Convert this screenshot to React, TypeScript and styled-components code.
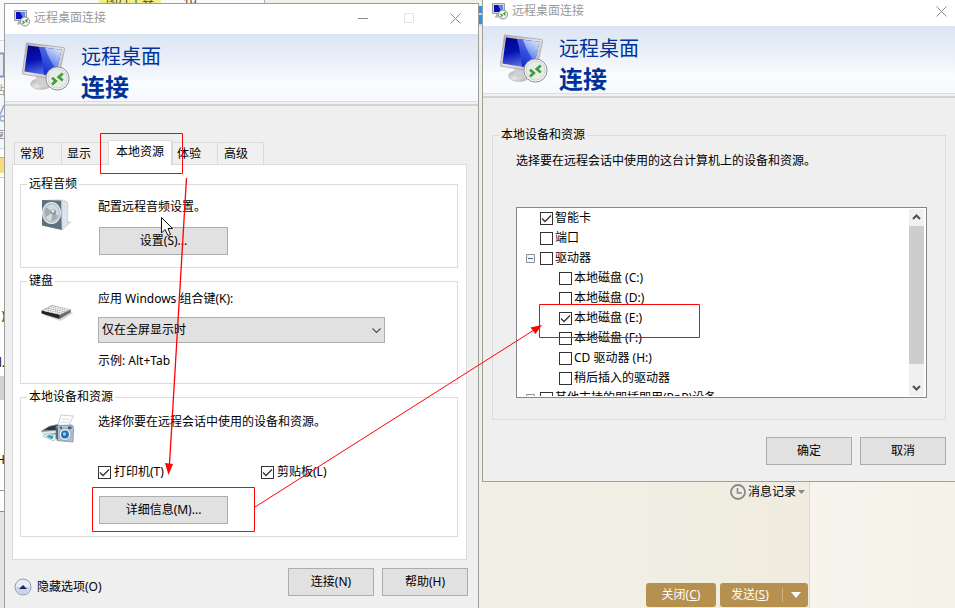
import React, { useId } from "react";
import styled, { createGlobalStyle, css } from "styled-components";

const GlobalStyle = createGlobalStyle`
  * { box-sizing: border-box; }
  body {
    margin: 0;
    background: #f2efe6;
    color: #000;
    font: 12px/16px "Noto Sans", "Noto Sans CJK SC", sans-serif;
  }
  button, select, input { font: inherit; color: inherit; margin: 0; }
`;

/* ---------- desktop ---------- */

const Desktop = styled.main`
  position: relative;
  min-height: 100vh;
  overflow: hidden;
  display: grid;
  grid-template-columns: 475fr 473fr;
  column-gap: 3px;
  padding-left: 4px;
  align-items: start;
`;

const Backdrop = styled.div`
  position: absolute;
  inset: 0;
  display: grid;
  grid-template-columns: 5px minmax(0, 1fr) 145px;
`;

const Strip = styled.div`
  display: flex;
  flex-direction: column;
  overflow: hidden;
  background: #fff;
`;

const StripBlock = styled.div<{ $h: number; $bg?: string; $line?: string; $color?: string }>`
  flex: none;
  display: flex;
  justify-content: flex-end;
  align-items: center;
  height: ${(p) => p.$h}px;
  background: ${(p) => p.$bg ?? "transparent"};
  border-top: ${(p) => (p.$line ? `1px solid ${p.$line}` : "none")};
  color: ${(p) => p.$color ?? "#111"};
`;

const StripFill = styled.div`
  flex: 1;
  background: #e4e5e8;
  border-top: 1px solid #8c8c90;
`;

const ChatPane = styled.div`
  display: flex;
  flex-direction: column;
  justify-content: space-between;
  align-items: flex-end;
  background: linear-gradient(90deg, #f2efe6 70%, #f0eee2 85%, #f0ecdf);
  border-right: 1px solid #dcd8ca;
`;

const SidePane = styled.div`
  background: linear-gradient(90deg, #f6f4ec, #f5f2e9);
`;

const RibbonTop = styled.div`
  display: flex;
  width: 100%;
  height: 27px;
  overflow: hidden;
  line-height: 6px;
  color: #4a4a38;
`;

const RibbonTitle = styled.div`
  flex: none;
  display: flex;
  gap: 22px;
  width: 260px;
  height: 3px;
  padding-left: 94px;
  background: #fafafa;
  border-right: 1px solid #aaa;
`;

const RibbonTag = styled.span`
  width: 62px;
  height: 3px;
  padding-left: 7px;
  background: #f2ee84;
  overflow: hidden;
  display: flex;
  align-items: flex-end;
`;

const RibbonAccent = styled.span`
  flex: none;
  width: 5px;
  height: 20px;
  margin: 6px 0 0 212px;
  background: repeating-linear-gradient(#2b94ea 0 7px, #b5dcfb 7px 9px, #2b94ea 9px 11px);
`;

const ChatFoot = styled.div`
  display: flex;
  flex-direction: column;
  align-items: flex-end;
  gap: 83px;
  padding: 0 1px 1px 0;
`;

const HistoryLink = styled.button`
  display: flex;
  align-items: center;
  gap: 2px;
  padding: 0 3px 0 0;
  border: 0;
  background: none;
  line-height: 16px;
`;

const ChatButtons = styled.div`
  display: flex;
  gap: 4px;
`;

const GoldButton = styled.button<{ $wide?: boolean }>`
  display: flex;
  align-items: center;
  justify-content: ${(p) => (p.$wide ? "flex-start" : "center")};
  width: ${(p) => (p.$wide ? 88 : 70)}px;
  height: 24px;
  padding: ${(p) => (p.$wide ? "0 0 0 11px" : 0)};
  border: 0;
  border-radius: 3px;
  background: #b5904e;
  color: #fff;
`;

const GoldSplit = styled.span`
  display: grid;
  place-items: center;
  width: 26px;
  height: 14px;
  margin-left: auto;
  border-left: 1px solid #cdb486;
`;

/* ---------- windows ---------- */

const Window = styled.section<{ $second?: boolean }>`
  position: relative;
  display: flex;
  flex-direction: column;
  background: #efefef;
  ${(p) =>
    p.$second
      ? css`
          border: solid #9fa09c;
          border-width: 0 0 1px 1px;
        `
      : css`
          margin-top: 3px;
          min-height: calc(100vh - 3px);
          border: solid #9d9d9b;
          border-width: 1px 1px 0;
        `}
`;

const TitleBar = styled.header<{ $second?: boolean }>`
  display: flex;
  align-items: center;
  height: ${(p) => (p.$second ? 26 : 30)}px;
  padding: 0 0 ${(p) => (p.$second ? 4 : 2)}px 9px;
  background: #fff;
  color: #999;
`;

const TitleText = styled.span`
  flex: 1;
  margin-left: 4px;
`;

const WinButton = styled.button<{ $narrow?: boolean }>`
  display: grid;
  place-items: center;
  width: ${(p) => (p.$narrow ? 28 : 46)}px;
  height: 20px;
  padding: 0;
  border: 0;
  background: none;
`;

const Banner = styled.div<{ $top: number }>`
  display: flex;
  gap: 10px;
  height: 67px;
  padding: ${(p) => p.$top}px 0 0 17px;
  background: linear-gradient(#dbe5f3, #e8eef8 35%, #fafcfd 75%, #f6f9fd);
  color: #003399;
`;

const BannerTitle = styled.h1`
  display: flex;
  flex-direction: column;
  margin: 0;
  font-size: 20px;
  font-weight: 400;
  line-height: 30px;
  strong { font-size: 24px; font-weight: 700; }
`;

const BannerEdge = styled.div`
  height: 5px;
  border-top: 1px solid #dcdcdc;
  border-bottom: 2px solid #d3d3d3;
  background: #f1f1f1;
`;

const TabList = styled.div`
  display: flex;
  align-items: flex-end;
  height: 25px;
  margin: 34px 0 -1px;
  padding-left: 9px;
  z-index: 1;
`;

const Tab = styled.button<{ $active?: boolean; $tight?: boolean }>`
  height: 22px;
  margin-bottom: 1px;
  padding: 0 ${(p) => (p.$tight ? 16 : 17)}px 0 ${(p) => (p.$tight ? 4 : 5)}px;
  border: solid #dadada;
  border-width: 1px 0 0 1px;
  background: #f0f0f0;
  line-height: 20px;
  &:last-child { padding-left: 6px; padding-right: 15px; border-right-width: 1px; }
  ${(p) =>
    p.$active &&
    css`
      height: 25px;
      margin-bottom: 0;
      padding: 0 7px 2px;
      border-width: 1px 1px 0;
      background: #fff;
      line-height: 22px;
    `}
`;

const TabPanel = styled.div`
  display: flex;
  flex-direction: column;
  gap: 5px;
  margin: 0 11px 0 7px;
  padding: 11px 8px 22px 7px;
  border: 1px solid #dadada;
  background: #fff;
`;

const Group = styled.fieldset`
  min-width: 0;
  margin: 0;
  padding: 0;
  border: 1px solid #dcdcdc;
`;

const GroupTitle = styled.legend`
  height: 16px;
  margin-left: 6px;
  padding: 0 2px;
`;

const GroupBody = styled.div<{ $top: number; $bottom?: number }>`
  display: grid;
  grid-template-columns: 57px minmax(0, 1fr);
  padding: ${(p) => p.$top}px 0 ${(p) => p.$bottom ?? 12}px 20px;
`;

const Fields = styled.div<{ $gap: number }>`
  display: flex;
  flex-direction: column;
  align-items: flex-start;
  gap: ${(p) => p.$gap}px;
`;

const IconCell = styled.div<{ $top?: number }>`
  padding-top: ${(p) => p.$top ?? 0}px;
  svg { display: block; }
`;

const PushButton = styled.button<{ $long?: boolean }>`
  width: ${(p) => (p.$long ? 129 : 86)}px;
  height: 28px;
  margin-left: ${(p) => (p.$long ? 1 : 0)}px;
  padding: 0;
  border: 1px solid #adadad;
  background: #e1e1e1;
`;

const SelectWrap = styled.div`
  display: grid;
  width: 287px;
  max-width: 100%;
  > * { grid-area: 1 / 1; }
  svg { place-self: center end; margin-right: 4px; pointer-events: none; }
`;

const Select = styled.select`
  appearance: none;
  height: 26px;
  padding: 0 20px 0 3px;
  border: 1px solid #adadad;
  border-radius: 0;
  background: #e1e1e1;
`;

const CheckRow = styled.div`
  display: grid;
  grid-template-columns: 163px auto;
  margin-top: 22px;
  margin-bottom: 4px;
`;

const CheckLabel = styled.label`
  display: flex;
  align-items: center;
  gap: 3px;
  white-space: nowrap;
`;

const CheckCell = styled.span`
  display: grid;
  place-items: center;
  > * { grid-area: 1 / 1; }
  svg { display: none; pointer-events: none; }
  input:checked + svg { display: block; }
`;

const CheckInput = styled.input`
  appearance: none;
  width: 13px;
  height: 13px;
  border: 1px solid #333;
  background: #fff;
`;

const Footer = styled.footer<{ $second?: boolean }>`
  display: flex;
  align-items: center;
  justify-content: flex-end;
  gap: 8px;
  padding: ${(p) => (p.$second ? "17px 9px 16px" : "8px 10px 12px 9px")};
`;

const OptionsToggle = styled.button`
  display: flex;
  align-items: center;
  gap: 5px;
  margin: 10px auto 0 0;
  padding: 0;
  border: 0;
  background: none;
`;

const DeviceBody = styled.div`
  padding: 29px 9px 0;
`;

const DeviceGroup = styled(Group)`
  padding: 10px 18px 21px 23px;
`;

const DeviceTitle = styled(GroupTitle)`
  margin-left: -17px;
`;

const Hint = styled.p`
  margin: 0 0 38px;
`;

const TreeBox = styled.div`
  display: flex;
  height: 191px;
  padding: 0 2px 1px 9px;
  border: 1px solid #828790;
  background: #fff;
`;

const Tree = styled.ul`
  flex: 1;
  margin: 0;
  padding: 0;
  overflow: hidden;
  list-style: none;
`;

const TreeItem = styled.li<{ $child?: boolean }>`
  display: grid;
  grid-template-columns: ${(p) => (p.$child ? 33 : 14)}px auto;
  align-items: center;
  height: 20px;
  label { gap: 2px; }
`;

const Expander = styled.button`
  display: block;
  width: 9px;
  height: 9px;
  padding: 0;
  border: 0;
  background: none;
  svg { display: block; }
`;

const ScrollBar = styled.div`
  display: flex;
  flex-direction: column;
  width: 15px;
  margin-top: 1px;
  background: #f0f0f0;
`;

const ScrollButton = styled.button`
  display: grid;
  place-items: center;
  height: 17px;
  padding: 0;
  border: 0;
  background: none;
`;

const ScrollThumb = styled.div`
  height: 138px;
  margin-bottom: auto;
  background: #cdcdcd;
`;

const Overlay = styled.svg`
  position: absolute;
  left: 0;
  top: 0;
  z-index: 2;
  pointer-events: none;
`;

/* ---------- icons ---------- */

function RemoteIcon() {
  const id = useId();
  return (
    <svg width="49" height="51" viewBox="0 0 49 51" aria-hidden="true">
      <defs>
        <linearGradient id={id + "a"} x1="0" y1="0" x2="0.3" y2="1">
          <stop offset="0" stopColor="#03037e" />
          <stop offset="0.5" stopColor="#0611b4" />
          <stop offset="1" stopColor="#5a74e6" />
        </linearGradient>
        <linearGradient id={id + "b"} x1="0" y1="0" x2="1" y2="1">
          <stop offset="0" stopColor="#a9a9a9" />
          <stop offset="0.5" stopColor="#e5e5e5" />
          <stop offset="1" stopColor="#a8a8a8" />
        </linearGradient>
        <linearGradient id={id + "c"} x1="0.2" y1="1" x2="0.7" y2="0">
          <stop offset="0" stopColor="#0a2bdc" />
          <stop offset="0.45" stopColor="#5f80ee" />
          <stop offset="1" stopColor="#d5e0fb" />
        </linearGradient>
      </defs>
      <ellipse cx="19" cy="42" rx="10.500" ry="5.500" fill={`url(#${id}b)`} stroke="#b8b8b8" strokeWidth="0.6" />
      <path d="M14 34 L26 36 L24 43 Q19 45 15 42Z" fill="#cfcfcf" />
      <path d="M4.500 1 L41.500 5.500 Q43 6 42.500 7.500 L36 38 L0.500 32 Q0 31 0.400 30Z" fill={`url(#${id}b)`} stroke="#9c9c9c" strokeWidth="0.7" />
      <path d="M6 3.500 L39.500 7.800 L33.500 34.500 L2.500 29.500Z" fill={`url(#${id}a)`} />
      <path d="M17 5 L39.500 7.800 L33.500 34.500 L22 32.600 Q21 18 17 5Z" fill={`url(#${id}c)`} />
      <path d="M17 5 Q21 18 22 32.600 L33.500 34.500 L35 28 Q28 20 23 5.700Z" fill="#0723cc" opacity="0.55" />
      <circle cx="35.500" cy="36.500" r="11.600" fill="#f6f6f6" stroke="#8e8e8e" />
      <circle cx="35.500" cy="36.500" r="9.600" fill="#e9ebe9" stroke="#c8c8c8" strokeWidth="0.8" />
      <path d="M30 35.800 L33.800 39 L30 42.500 M40.800 31.500 L36.700 35 L40.800 38.500" fill="none" stroke="#3c9f38" strokeWidth="2.600" />
    </svg>
  );
}

function RemoteIconSmall() {
  return (
    <svg width="16" height="17" viewBox="0 0 16 17" aria-hidden="true">
      <path d="M4 11 H9 V13 H10 V14.500 H3 V13 H4Z" fill="#b5b5b5" />
      <path d="M0.500 0.500 H12.500 V10.500 H0.500Z" fill="#d9d9d9" stroke="#9a9a9a" />
      <path d="M2 2 H11 V9 H2Z" fill="#0611b8" />
      <path d="M6 2 H11 V9 L9 8Z" fill="#5f84ee" />
      <circle cx="11" cy="11.500" r="4.500" fill="#f4f4f4" stroke="#8e8e8e" />
      <path d="M8.500 11 L10.200 12.300 L8.700 13.800 M13.500 9.200 L11.800 10.800 L13.500 12.300" fill="none" stroke="#2f9a2c" strokeWidth="1.300" />
    </svg>
  );
}

function SpeakerIcon() {
  return (
    <svg width="32" height="32" viewBox="0 0 32 32" aria-hidden="true">
      <path d="M20 31 L31 23 L27 22Z" fill="#ccc" opacity="0.7" />
      <path d="M1 1 L17 0 Q24 0 27 3 L26 25 L21 31 L1 27Z" fill="#dfe6ec" />
      <path d="M1 1 L20.500 1.500 L21 31 L1 26.500Z" fill="#5c7280" />
      <path d="M20.500 1.500 Q25 2 27 4 L26.500 26 L21 31Z" fill="#dbe4ec" stroke="#b5c2cc" strokeWidth="0.5" />
      <ellipse cx="10.500" cy="14" rx="9" ry="10.500" fill="#b4bfc5" stroke="#e8eef0" strokeWidth="1.200" />
      <ellipse cx="10.800" cy="14" rx="7" ry="8.400" fill="#d3dade" />
      <path d="M12 13 L5 8 Q3 13 5 18Z M12 13 L10 22 Q15 22 17 17Z" fill="#a2adb3" />
      <circle cx="12.500" cy="13" r="2.600" fill="#8a969d" />
      <circle cx="12" cy="12.300" r="1.300" fill="#f1f6f8" />
    </svg>
  );
}

function KeyboardIcon() {
  return (
    <svg width="32" height="18" viewBox="0 0 32 18" aria-hidden="true">
      <path d="M2 11 L20 17 L32 9 L28 6Z" fill="#bbb" opacity="0.6" />
      <path d="M0.500 6.500 L19 10.500 L18.500 15 L0.500 9.500Z" fill="#252525" />
      <path d="M19 10.500 L30 5.500 L29.500 8.500 L18.500 15Z" fill="#66696c" />
      <path d="M0.500 6.500 L11 1 L30 5.500 L19 11Z" fill="#a2a2a2" />
      <path d="M3 6.200 L20 9.800 M5.500 4.900 L22.500 8.500 M8 3.600 L25 7.200 M10.500 2.400 L27.500 6" stroke="#fbfbfb" strokeWidth="1.300" strokeDasharray="1.900 0.400" fill="none" />
    </svg>
  );
}

function PrinterIcon() {
  return (
    <svg width="34" height="30" viewBox="0 0 34 30" aria-hidden="true">
      <path d="M17 11 L20 1 L32.500 2 L27 13Z" fill="#fcfcfc" stroke="#b6bbc0" strokeWidth="0.7" />
      <path d="M21 5 L29 5.500 M20 8 L28 8.500" stroke="#dbe0e4" />
      <path d="M0 17 L8 12 L17 10 L18 23 L6 24Z" fill="#7d8a94" />
      <path d="M3 16 L9 12.500 L17 11 L16 16Z" fill="#30383e" />
      <path d="M0 18 L15 16.500 L15 19 L2 21Z" fill="#dfe7ec" />
      <path d="M2 22.500 L5 20 L17 20.500 L13 27Z" fill="#e8f5fc" stroke="#9eacb6" strokeWidth="0.6" />
      <path d="M5 22.500 L8 21 L13 22 L11 25Z" fill="#3f9cce" />
      <path d="M8 24 L11 23 L12 25Z" fill="#58a84f" />
      <path d="M15 12.500 L18 11.500 L31 11 Q32.500 12 32.500 14 L32 28 L16 26.500Z" fill="#b4c1cb" stroke="#758492" strokeWidth="0.7" />
      <path d="M15 13.500 L17 13 L17 26 L14.500 24Z" fill="#596977" />
      <circle cx="24" cy="20.500" r="6" fill="#e6edf2" stroke="#8295a3" strokeWidth="0.7" />
      <circle cx="24" cy="20.500" r="3.900" fill="#1d6fb6" />
      <circle cx="23.500" cy="20" r="1.700" fill="#8ad2f4" />
      <circle cx="20" cy="13.800" r="1.200" fill="#2f699e" />
      <path d="M27 12.500 H30.500 V15 H27Z" fill="#2c5f98" />
    </svg>
  );
}

const CloseGlyph = () => (
  <svg width="11" height="11" viewBox="0 0 11 11" aria-hidden="true">
    <path d="M0.500 0.500 L10.500 10.500 M10.500 0.500 L0.500 10.500" stroke="#8c8c8c" />
  </svg>
);

const Chevron = ({ up, bold }: { up?: boolean; bold?: boolean }) => (
  <svg width="9" height="7" viewBox="0 0 9 7" aria-hidden="true">
    <path d={up ? "M1 5 L4.500 1.500 L8 5" : bold ? "M1 2 L4.500 5.500 L8 2" : "M0.500 1.500 L4.500 5.500 L8.500 1.500"} fill="none" stroke="#505050" strokeWidth={bold ? 2 : 1.1} />
  </svg>
);

/* ---------- parts ---------- */

function Check({ label, checked }: { label: string; checked?: boolean }) {
  return (
    <CheckLabel>
      <CheckCell>
        <CheckInput type="checkbox" defaultChecked={checked} />
        <svg width="11" height="9" viewBox="0 0 11 9" aria-hidden="true">
          <path d="M1 4.500 L4 7.500 L10 1.500" fill="none" stroke="#333" strokeWidth="1.300" />
        </svg>
      </CheckCell>
      {label}
    </CheckLabel>
  );
}

function WindowHead({ top }: { top: number }) {
  return (
    <>
      <Banner $top={top}>
        <RemoteIcon />
        <BannerTitle>
          远程桌面<strong>连接</strong>
        </BannerTitle>
      </Banner>
      <BannerEdge />
    </>
  );
}

const treeItems = [
  { label: "智能卡", checked: true },
  { label: "端口" },
  { label: "驱动器", open: true },
  { label: "本地磁盘 (C:)", child: true },
  { label: "本地磁盘 (D:)", child: true },
  { label: "本地磁盘 (E:)", child: true, checked: true },
  { label: "本地磁盘 (F:)", child: true },
  { label: "CD 驱动器 (H:)", child: true },
  { label: "稍后插入的驱动器", child: true },
  { label: "其他支持的即插即用(PnP)设备", open: true },
];

function SettingsWindow() {
  return (
    <Window aria-label="远程桌面连接">
      <TitleBar>
        <RemoteIconSmall />
        <TitleText>远程桌面连接</TitleText>
        <WinButton aria-label="最小化">
          <svg width="10" height="11"><path d="M0 5.500 H10" stroke="#8c8c8c" /></svg>
        </WinButton>
        <WinButton aria-label="最大化" disabled>
          <svg width="10" height="10"><path d="M0.500 0.500 H9.500 V9.500 H0.500Z" fill="none" stroke="#e3e3e3" /></svg>
        </WinButton>
        <WinButton aria-label="关闭"><CloseGlyph /></WinButton>
      </TitleBar>
      <WindowHead top={8} />
      <TabList role="tablist">
        <Tab role="tab">常规</Tab>
        <Tab role="tab">显示</Tab>
        <Tab role="tab" aria-selected $active>本地资源</Tab>
        <Tab role="tab" $tight>体验</Tab>
        <Tab role="tab">高级</Tab>
      </TabList>
      <TabPanel role="tabpanel">
        <Group>
          <GroupTitle>远程音频</GroupTitle>
          <GroupBody $top={7}>
            <IconCell><SpeakerIcon /></IconCell>
            <Fields $gap={12}>
              <span>配置远程音频设置。</span>
              <PushButton $long>设置(S)...</PushButton>
            </Fields>
          </GroupBody>
        </Group>
        <Group>
          <GroupTitle>键盘</GroupTitle>
          <GroupBody $top={2} $bottom={14}>
            <IconCell $top={13}><KeyboardIcon /></IconCell>
            <Fields $gap={10}>
              <label htmlFor="keys">应用 Windows 组合键(K):</label>
              <SelectWrap>
                <Select id="keys"><option>仅在全屏显示时</option></Select>
                <Chevron />
              </SelectWrap>
              <span>示例: Alt+Tab</span>
            </Fields>
          </GroupBody>
        </Group>
        <Group>
          <GroupTitle>本地设备和资源</GroupTitle>
          <GroupBody $top={9}>
            <IconCell><PrinterIcon /></IconCell>
            <Fields $gap={12}>
              <span>选择你要在远程会话中使用的设备和资源。</span>
              <CheckRow>
                <Check label="打印机(T)" checked />
                <Check label="剪贴板(L)" checked />
              </CheckRow>
              <PushButton $long>详细信息(M)...</PushButton>
            </Fields>
          </GroupBody>
        </Group>
      </TabPanel>
      <Footer>
        <OptionsToggle>
          <svg width="18" height="18" viewBox="0 0 18 18" aria-hidden="true">
            <circle cx="9" cy="9" r="8" fill="#e8ecf4" stroke="#8f9bb5" />
            <path d="M2 9 A7 7 0 0 0 16 9Z" fill="#cbd3e4" />
            <path d="M5 11 L9 7 L13 11Z" fill="#172b5c" />
          </svg>
          隐藏选项(O)
        </OptionsToggle>
        <PushButton>连接(N)</PushButton>
        <PushButton>帮助(H)</PushButton>
      </Footer>
    </Window>
  );
}

function DevicesWindow() {
  return (
    <Window $second aria-label="本地设备和资源">
      <TitleBar $second>
        <RemoteIconSmall />
        <TitleText>远程桌面连接</TitleText>
        <WinButton $narrow aria-label="关闭"><CloseGlyph /></WinButton>
      </TitleBar>
      <WindowHead top={8} />
      <DeviceBody>
        <DeviceGroup>
          <DeviceTitle>本地设备和资源</DeviceTitle>
          <Hint>选择要在远程会话中使用的这台计算机上的设备和资源。</Hint>
          <TreeBox>
            <Tree>
              {treeItems.map((item) => (
                <TreeItem key={item.label} $child={item.child}>
                  {item.open ? (
                    <Expander aria-label="折叠">
                      <svg width="9" height="9" viewBox="0 0 9 9">
                        <path d="M0.500 0.500 H8.500 V8.500 H0.500Z" fill="#f6f6f6" stroke="#919191" />
                        <path d="M2 4.500 H7" stroke="#4b63a7" />
                      </svg>
                    </Expander>
                  ) : (
                    <span />
                  )}
                  <Check label={item.label} checked={item.checked} />
                </TreeItem>
              ))}
            </Tree>
            <ScrollBar>
              <ScrollButton aria-label="向上滚动"><Chevron up bold /></ScrollButton>
              <ScrollThumb />
              <ScrollButton aria-label="向下滚动"><Chevron bold /></ScrollButton>
            </ScrollBar>
          </TreeBox>
        </DeviceGroup>
      </DeviceBody>
      <Footer $second>
        <PushButton>确定</PushButton>
        <PushButton>取消</PushButton>
      </Footer>
    </Window>
  );
}

export default function App() {
  return (
    <Desktop lang="zh-CN">
      <GlobalStyle />
      <Backdrop>
        <Strip>
          <StripBlock $h={40} $bg="#fafafa" />
          <StripBlock $h={12} $line="#d5dae2" $bg="#f3f6fa" />
          <StripBlock $h={26} $bg="#f3f6fa">
            <svg width="5" height="26" aria-hidden="true">
              <path d="M0 1.500 H4 V24.500 H0" fill="#e4ecf8" stroke="#7f98c6" strokeWidth="2" />
            </svg>
          </StripBlock>
          <StripBlock $h={26} $bg="#f3f6fa" $color="#999">贴</StripBlock>
          <StripBlock $h={20} $bg="#f3f6fa">
            <svg width="5" height="18" aria-hidden="true">
              <path d="M4 0 L0 10" stroke="#93a5c9" strokeWidth="1.500" />
              <circle cx="2.500" cy="13.500" r="2.500" fill="none" stroke="#93a5c9" strokeWidth="1.300" />
            </svg>
          </StripBlock>
          <StripBlock $h={24} $bg="#f3f6fa" $color="#888">享</StripBlock>
          <StripBlock $h={9} $line="#d0d4da" />
          <StripBlock $h={16} $bg="#f8dc7c" $line="#d9b544" />
          <StripBlock $h={4} />
          <StripBlock $h={131} $line="#c4c8ce" />
          <StripBlock $h={16}>)</StripBlock>
          <StripBlock $h={31} />
          <StripBlock $h={16}>d.</StripBlock>
          <StripBlock $h={5} />
          <StripBlock $h={24} $bg="#d2d2d2" />
          <StripBlock $h={52} />
          <StripBlock $h={16}>H</StripBlock>
          <StripBlock $h={22} />
          <StripBlock $h={21} $line="#999" />
          <StripFill />
        </Strip>
        <ChatPane>
          <RibbonTop>
            <RibbonTitle>
              <RibbonTag>图片工具</RibbonTag>
              <span>19</span>
            </RibbonTitle>
            <RibbonAccent />
          </RibbonTop>
          <ChatFoot>
            <HistoryLink>
              <svg width="16" height="16" viewBox="0 0 16 16" aria-hidden="true">
                <circle cx="8" cy="8" r="7" fill="none" stroke="#85898d" strokeWidth="1.800" />
                <path d="M7.500 4 V9 H12" fill="none" stroke="#85898d" strokeWidth="1.600" />
              </svg>
              消息记录
              <svg width="7" height="4" aria-hidden="true"><path d="M0 0 H7 L3.500 4Z" fill="#888" /></svg>
            </HistoryLink>
            <ChatButtons>
              <GoldButton><span>关闭(<u>C</u>)</span></GoldButton>
              <GoldButton $wide>
                <span>发送(<u>S</u>)</span>
                <GoldSplit>
                  <svg width="10" height="6" aria-hidden="true"><path d="M0 0 H10 L5 6Z" fill="#fff" /></svg>
                </GoldSplit>
              </GoldButton>
            </ChatButtons>
          </ChatFoot>
        </ChatPane>
        <SidePane />
      </Backdrop>
      <SettingsWindow />
      <DevicesWindow />
      <Overlay width="955" height="608" viewBox="0 0 955 608" aria-hidden="true">
        <path d="M161.500 217.500 V233 L165 229.500 L168 235.500 L170.500 234.500 L168 228.500 H172.500Z" fill="#fff" stroke="#111" />
        <g fill="none" stroke="#fb0505">
          <path d="M100.500 133.500 H182.500 V173.500 H100.500Z" />
          <path d="M92.500 487.500 H254.500 V531.500 H92.500Z" />
          <path d="M539.500 304.500 H699.500 V337.500 H539.500Z" />
          <path d="M186.500 178 L169.500 464" strokeWidth="1.300" />
          <path d="M255 507 L534 330" />
        </g>
        <path d="M165 463 L173 464 L168.500 475Z M542 325 L530.500 327.500 L535.500 334Z" fill="#fb0505" />
      </Overlay>
    </Desktop>
  );
}
